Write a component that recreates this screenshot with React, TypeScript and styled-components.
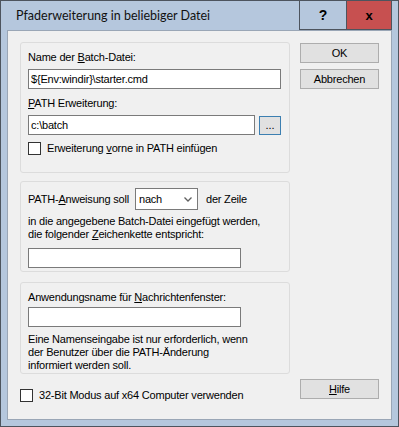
import React from 'react';
import styled, {createGlobalStyle} from 'styled-components';

const Global = createGlobalStyle`
    html, body {
        margin: 0;
        padding: 0;
        background: #ffffff;
    }
    * {
        box-sizing: border-box;
    }
`;

const Window = styled.div`
    width: 399px;
    height: 427px;
    background-color: #b5c7dd;
    border: 1px solid #4d545e;
    padding: 0 6px 6px 6px;
    display: flex;
    flex-direction: column;
    font-family: 'Liberation Sans', Arial, sans-serif;
    font-size: 11px;
    letter-spacing: -0.2px;
    color: #000;
`;

const TitleBar = styled.div`
    height: 29px;
    display: flex;
    align-items: stretch;
`;

const Title = styled.div`
    flex: 1;
    padding-left: 9px;
    display: flex;
    align-items: center;
    font-family: Lato, 'Open Sans', sans-serif;
    font-size: 12.5px;
    letter-spacing: 0;
    color: #111;
`;

const CaptionButton = styled.div<{$close?: boolean}>`
    width: ${p => (p.$close ? '45px' : '48px')};
    display: flex;
    align-items: center;
    justify-content: center;
    background-color: ${p => (p.$close ? '#c75050' : 'transparent')};
    border: 1px solid #4d545e;
    border-top: none;
    border-left: ${p => (p.$close ? 'none' : '1px solid #4d545e')};
    font-family: 'Liberation Sans', Arial, sans-serif;
    font-weight: bold;
    font-size: ${p => (p.$close ? '13px' : '14px')};
    letter-spacing: 0;
    color: #000;
`;

const Client = styled.div`
    flex: 1;
    background-color: #f0f0f0;
    border: 1px solid #9aa6b6;
    display: flex;
    padding: 11px 12px 0 12px;
    gap: 10px;
`;

const LeftColumn = styled.div`
    width: 270px;
    display: flex;
    flex-direction: column;
`;

const RightColumn = styled.div`
    width: 79px;
    display: flex;
    flex-direction: column;
    padding-top: 1px;
    padding-bottom: 20px;
`;

const Group = styled.div<{$height: number; $gap: number}>`
    height: ${p => p.$height}px;
    margin-bottom: ${p => p.$gap}px;
    border: 1px solid #dcdcdc;
    border-radius: 3px;
    padding: 7px 8px 0 7px;
    display: flex;
    flex-direction: column;
`;

const Label = styled.div<{$top?: number}>`
    line-height: 13px;
    margin-top: ${p => p.$top ?? 0}px;
    white-space: nowrap;
`;

const U = styled.span`
    text-decoration: underline;
    text-underline-offset: 1px;
`;

const TextBox = styled.div<{$width: number; $top: number}>`
    width: ${p => p.$width}px;
    height: 20px;
    margin-top: ${p => p.$top}px;
    background: #ffffff;
    border: 1px solid #7a7a7a;
    padding-left: 2px;
    display: flex;
    align-items: center;
    line-height: 13px;
`;

const Row = styled.div<{$top?: number}>`
    display: flex;
    align-items: center;
    margin-top: ${p => p.$top ?? 0}px;
`;

const BrowseButton = styled.div`
    width: 22px;
    height: 19px;
    margin-left: 4px;
    background: #e1e1e1;
    border: 1px solid #3c7fb1;
    display: flex;
    align-items: flex-end;
    justify-content: center;
    line-height: 13px;
    padding-bottom: 2px;
    letter-spacing: 0;
`;

const Check = styled.div`
    width: 13px;
    height: 13px;
    background: #ffffff;
    border: 1px solid #333333;
    flex-shrink: 0;
`;

const CheckLabel = styled.div`
    margin-left: 6px;
    line-height: 13px;
    white-space: nowrap;
`;

const Select = styled.div`
    width: 63px;
    height: 22px;
    margin: 0 8px 0 6px;
    background: #ffffff;
    border: 1px solid #7a7a7a;
    display: flex;
    align-items: center;
    justify-content: space-between;
    padding: 0 5px 0 3px;
`;

const Text = styled.div<{$top: number}>`
    margin-top: ${p => p.$top}px;
    line-height: 13px;
    white-space: nowrap;
`;

const Button = styled.div<{$top?: number}>`
    width: 79px;
    height: 20px;
    margin-top: ${p => p.$top ?? 0}px;
    background: #e1e1e1;
    border: 1px solid #adadad;
    display: flex;
    align-items: center;
    justify-content: center;
    line-height: 13px;
`;

const Spacer = styled.div`
    flex: 1;
`;

const Chevron = () => (
    <svg width="8" height="5" viewBox="0 0 8 5">
        <path d="M0.5 0.5 L4 4 L7.5 0.5" fill="none" stroke="#606060" strokeWidth="1.3" />
    </svg>
);

const App = (): JSX.Element => {
    return (
        <>
            <Global />
            <Window>
                <TitleBar>
                    <Title>Pfaderweiterung in beliebiger Datei</Title>
                    <CaptionButton>?</CaptionButton>
                    <CaptionButton $close>x</CaptionButton>
                </TitleBar>
                <Client>
                    <LeftColumn>
                        <Group $height={131} $gap={8}>
                            <Label $top={1}>
                                Name der <U>B</U>atch-Datei:
                            </Label>
                            <TextBox $width={253} $top={5}>
                                {'${Env:windir}\\starter.cmd'}
                            </TextBox>
                            <Label $top={8}>
                                <U>P</U>ATH Erweiterung:
                            </Label>
                            <Row $top={5}>
                                <TextBox $width={228} $top={0}>
                                    c:\batch
                                </TextBox>
                                <BrowseButton>...</BrowseButton>
                            </Row>
                            <Row $top={7}>
                                <Check />
                                <CheckLabel>
                                    Erweiterung <U>v</U>orne in PATH einfügen
                                </CheckLabel>
                            </Row>
                        </Group>
                        <Group $height={91} $gap={10}>
                            <Row $top={-1}>
                                PATH-<U>A</U>nweisung soll
                                <Select>
                                    nach
                                    <Chevron />
                                </Select>
                                der Zeile
                            </Row>
                            <Text $top={5}>in die angegebene Batch-Datei eingefügt werden,</Text>
                            <Text $top={0}>
                                die folgender <U>Z</U>eichenkette entspricht:
                            </Text>
                            <TextBox $width={213} $top={7} />
                        </Group>
                        <Group $height={92} $gap={0}>
                            <Label $top={1}>
                                Anwendungsname für <U>N</U>achrichtenfenster:
                            </Label>
                            <TextBox $width={213} $top={3} />
                            <Text $top={6}>Eine Namenseingabe ist nur erforderlich, wenn</Text>
                            <Text $top={0}>der Benutzer über die PATH-Änderung</Text>
                            <Text $top={0}>informiert werden soll.</Text>
                        </Group>
                        <Row $top={15}>
                            <Check />
                            <CheckLabel>32-Bit Modus auf x64 Computer verwenden</CheckLabel>
                        </Row>
                    </LeftColumn>
                    <RightColumn>
                        <Button>OK</Button>
                        <Button $top={6}>Abbrechen</Button>
                        <Spacer />
                        <Button>
                            <U>H</U>ilfe
                        </Button>
                    </RightColumn>
                </Client>
            </Window>
        </>
    );
};

export default App;
